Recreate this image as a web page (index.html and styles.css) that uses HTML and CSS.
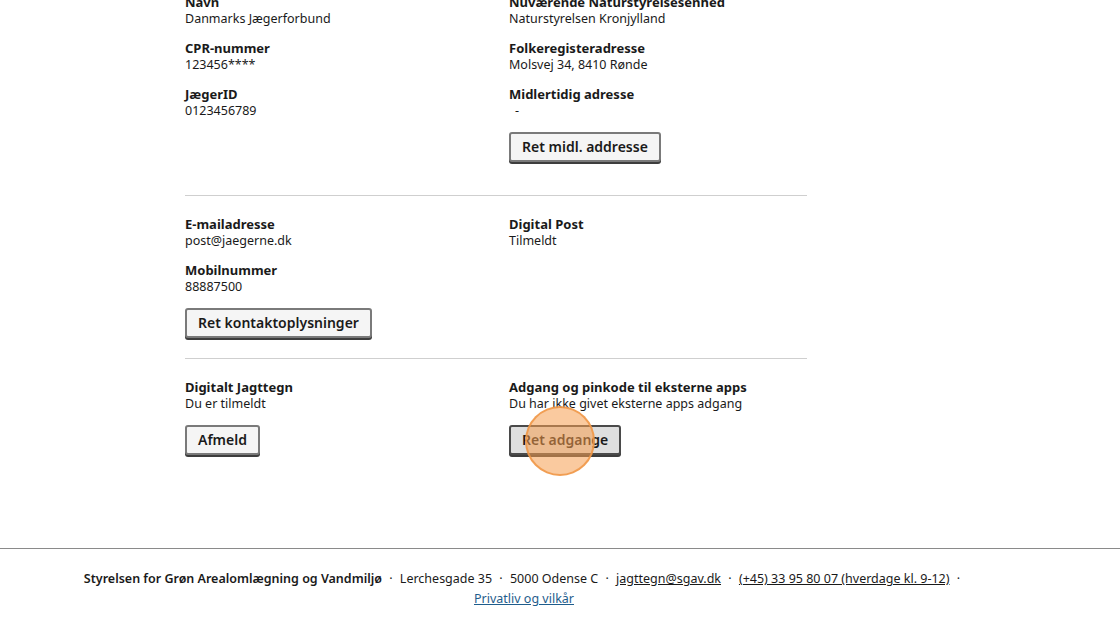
FILE: index.html
```html
<!DOCTYPE html>
<html lang="da">

<head>
    <meta charset="utf-8" />
    <meta name="viewport" content="width=device-width, initial-scale=1.0">
    <title>Mine oplysninger</title>
    <link rel="stylesheet" href="styles.css">
</head>

<body>
    <main class="content">
        <section class="block first">
            <div class="grid">
                <div class="col">
                    <div class="field">
                        <h3>Navn</h3>
                        <p>Danmarks Jægerforbund</p>
                    </div>
                    <div class="field">
                        <h3>CPR-nummer</h3>
                        <p>123456****</p>
                    </div>
                    <div class="field">
                        <h3>JægerID</h3>
                        <p>0123456789</p>
                    </div>
                </div>
                <div class="col">
                    <div class="field">
                        <h3>Nuværende Naturstyrelsesenhed</h3>
                        <p>Naturstyrelsen Kronjylland</p>
                    </div>
                    <div class="field">
                        <h3>Folkeregisteradresse</h3>
                        <p>Molsvej 34, 8410 Rønde</p>
                    </div>
                    <div class="field">
                        <h3>Midlertidig adresse</h3>
                        <p class="dash">-</p>
                    </div>
                    <button class="btn">Ret midl. addresse</button>
                </div>
            </div>
        </section>

        <section class="block">
            <div class="grid">
                <div class="col">
                    <div class="field">
                        <h3>E-mailadresse</h3>
                        <p>post@jaegerne.dk</p>
                    </div>
                    <div class="field">
                        <h3>Mobilnummer</h3>
                        <p>88887500</p>
                    </div>
                    <button class="btn">Ret kontaktoplysninger</button>
                </div>
                <div class="col">
                    <div class="field">
                        <h3>Digital Post</h3>
                        <p>Tilmeldt</p>
                    </div>
                </div>
            </div>
        </section>

        <section class="block last">
            <div class="grid">
                <div class="col">
                    <div class="field">
                        <h3>Digitalt Jagttegn</h3>
                        <p>Du er tilmeldt</p>
                    </div>
                    <button class="btn">Afmeld</button>
                </div>
                <div class="col">
                    <div class="field">
                        <h3>Adgang og pinkode til eksterne apps</h3>
                        <p>Du har ikke givet eksterne apps adgang</p>
                    </div>
                    <div class="btnWrap">
                        <button class="btn hover">Ret adgange</button>
                        <span class="clickMark"></span>
                    </div>
                </div>
            </div>
        </section>
    </main>

    <footer class="footer">
        <p>
            <strong>Styrelsen for Grøn Arealomlægning og Vandmiljø</strong>
            <span class="dot">·</span> Lerchesgade 35
            <span class="dot">·</span> 5000 Odense C
            <span class="dot">·</span> <a href="#">jagttegn@sgav.dk</a>
            <span class="dot">·</span> <a href="#">(+45) 33 95 80 07 (hverdage kl. 9-12)</a>
            <span class="dot">·</span>
        </p>
        <p><a href="#" class="blue">Privatliv og vilkår</a></p>
    </footer>
</body>

</html>
```

FILE: styles.css
```css
* {
    box-sizing: border-box;
}

h1,
h2,
h3,
p,
body {
    margin: 0px;
    padding: 0px;
}

body {
    font-family: "Noto Sans", "Liberation Sans", sans-serif;
    font-size: 12.5px;
    line-height: 16px;
    color: #1a1a1a;
    background: #ffffff;
    overflow: hidden;
}

.content {
    width: 622px;
    margin: -6px 0 0 185px;
}

.block {
    padding: 0 0 20px 0;
    margin-bottom: 20px;
    border-bottom: 1px solid #cfcfcf;
}

.block.first {
    padding-bottom: 33px;
}

.block.last {
    border-bottom: none;
    margin-bottom: 0;
    padding-bottom: 93px;
}

.grid {
    display: grid;
    grid-template-columns: 324px 298px;
}

.col {
    display: flex;
    flex-direction: column;
    align-items: flex-start;
}

.field {
    margin-bottom: 13px;
}

.field h3 {
    font-size: 13px;
    font-weight: 700;
    line-height: 16px;
}

.field p {
    line-height: 17px;
}

.dash {
    padding-left: 6px;
}

.btn {
    font-family: inherit;
    font-size: 14px;
    font-weight: 600;
    color: #1a1a1a;
    background: #f5f5f5;
    border: 2px solid #7a7a7a;
    border-radius: 3px;
    box-shadow: 0 2px 0 #3d3d3d;
    padding: 3px 11px;
    line-height: 20px;
}

.btn.hover {
    background: #dedede;
    border-color: #4a4a4a;
}

.btnWrap {
    position: relative;
}

.clickMark {
    position: absolute;
    left: 16px;
    top: -19px;
    width: 70px;
    height: 70px;
    border-radius: 50%;
    background: rgba(245, 158, 80, 0.55);
    border: 2px solid rgba(240, 150, 70, 0.85);
}

.footer {
    border-top: 1px solid #8a8a8a;
    padding: 20px 72px 20px 0;
    text-align: center;
    font-size: 12.5px;
    line-height: 20px;
}

.footer strong {
    font-weight: 600;
}

.dot {
    padding: 0 4px;
}

.footer a {
    color: #1a1a1a;
}

.footer a.blue {
    color: #1f5d8c;
}
```
